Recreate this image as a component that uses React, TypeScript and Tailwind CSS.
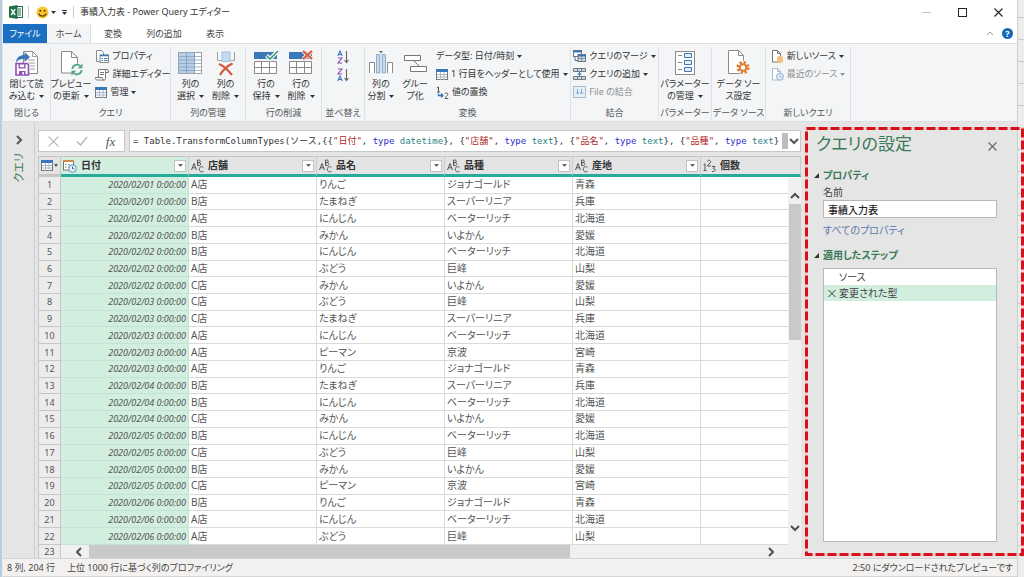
import React from "react";

type Row = [string, string, string, string, string];

const ROWS: Row[] = [
  ["2020/02/01 0:00:00", "A店", "りんご", "ジョナゴールド", "青森"],
  ["2020/02/01 0:00:00", "B店", "たまねぎ", "スーパーリニア", "兵庫"],
  ["2020/02/01 0:00:00", "A店", "にんじん", "ベーターリッチ", "北海道"],
  ["2020/02/02 0:00:00", "B店", "みかん", "いよかん", "愛媛"],
  ["2020/02/02 0:00:00", "B店", "にんじん", "ベーターリッチ", "北海道"],
  ["2020/02/02 0:00:00", "A店", "ぶどう", "巨峰", "山梨"],
  ["2020/02/02 0:00:00", "C店", "みかん", "いよかん", "愛媛"],
  ["2020/02/03 0:00:00", "C店", "ぶどう", "巨峰", "山梨"],
  ["2020/02/03 0:00:00", "C店", "たまねぎ", "スーパーリニア", "兵庫"],
  ["2020/02/03 0:00:00", "A店", "にんじん", "ベーターリッチ", "北海道"],
  ["2020/02/03 0:00:00", "A店", "ピーマン", "京波", "宮崎"],
  ["2020/02/03 0:00:00", "A店", "りんご", "ジョナゴールド", "青森"],
  ["2020/02/04 0:00:00", "B店", "たまねぎ", "スーパーリニア", "兵庫"],
  ["2020/02/04 0:00:00", "B店", "にんじん", "ベーターリッチ", "北海道"],
  ["2020/02/04 0:00:00", "C店", "みかん", "いよかん", "愛媛"],
  ["2020/02/05 0:00:00", "B店", "にんじん", "ベーターリッチ", "北海道"],
  ["2020/02/05 0:00:00", "C店", "ぶどう", "巨峰", "山梨"],
  ["2020/02/05 0:00:00", "B店", "みかん", "いよかん", "愛媛"],
  ["2020/02/05 0:00:00", "C店", "ピーマン", "京波", "宮崎"],
  ["2020/02/06 0:00:00", "B店", "りんご", "ジョナゴールド", "青森"],
  ["2020/02/06 0:00:00", "A店", "にんじん", "ベーターリッチ", "北海道"],
  ["2020/02/06 0:00:00", "A店", "ぶどう", "巨峰", "山梨"],
];

const TEXT_COLUMNS = ["店舗", "品名", "品種", "産地"];

function Caret() {
  return (
    <svg width="5" height="3" viewBox="0 0 5 3" className="shrink-0">
      <path d="M0 0h5L2.5 3z" fill="currentColor" />
    </svg>
  );
}

/* ---------- icons ---------- */

function ExcelIcon() {
  return (
    <svg width="14" height="14" viewBox="0 0 14 14">
      <rect x="7.5" y="1.5" width="6" height="11" fill="#fff" stroke="#217346" />
      <path d="M9 4h3M9 6h3M9 8h3M9 10h3" stroke="#217346" />
      <path d="M0 1.5L8.5 0v14L0 12.5z" fill="#1e7145" />
      <path d="M2.2 4.2l4 5.8M6.2 4.2l-4 5.8" stroke="#fff" strokeWidth="1.4" />
    </svg>
  );
}

function SmileIcon() {
  return (
    <svg width="13" height="13" viewBox="0 0 13 13">
      <circle cx="6.5" cy="6.5" r="6" fill="#fbc62d" />
      <circle cx="4.4" cy="4.8" r="1" fill="#4a3a10" />
      <circle cx="8.6" cy="4.8" r="1" fill="#4a3a10" />
      <path d="M2.8 7.5a3.9 3.9 0 0 0 7.4 0" fill="none" stroke="#4a3a10" strokeWidth="1.1" />
    </svg>
  );
}

function CloseLoadIcon() {
  return (
    <svg width="24" height="26" viewBox="0 0 24 26">
      <path d="M8.5 1.500h9l5 5v17h-14z" fill="#fff" stroke="#8a8a8a" />
      <path d="M17.500 1.500v5h5M13 10h7M13 13h7M15 16h5M15 19h5" fill="none" stroke="#a0a0a0" />
      <path d="M1 12.500C1.500 7 5 5 9.500 5V2l5.500 5-5.500 5V8.800C6 8.800 3.500 9.500 1 12.500z" fill="#3a76b8" />
      <path d="M1 13.500h11l1.500 1.500v10H1z" fill="#fff" stroke="#8e4fb4" strokeWidth="1.600" />
      <path d="M3.500 14h7v4.500h-7zM4 21h6.500v4H4z" fill="#8e4fb4" />
      <path d="M4.800 14.500h4.400v2.700H4.800zM7.300 22h1.700v2.500H7.300z" fill="#fff" />
    </svg>
  );
}

function RefreshIcon() {
  return (
    <svg width="24" height="26" viewBox="0 0 24 26">
      <path d="M2.500 1.500h10l6 6v15.500h-16z" fill="#fff" stroke="#8a8a8a" />
      <path d="M12.500 1.500v6h6" fill="none" stroke="#8a8a8a" />
      <circle cx="18" cy="19.500" r="6" fill="#f3f5f7" />
      <path d="M13.300 18.800a4.800 4.800 0 0 1 8.300-2.600M22.700 20.200a4.800 4.800 0 0 1-8.300 2.600" fill="none" stroke="#4fa582" strokeWidth="1.700" />
      <path d="M23.500 13.500v4.700h-4.700zM12.500 25.500v-4.700h4.700z" fill="#4fa582" />
    </svg>
  );
}

function PropertiesIcon() {
  return (
    <svg width="14" height="13" viewBox="0 0 14 13">
      <path d="M1.500 11.500V.5h5l2 2V5" fill="#fff" stroke="#8a8a8a" />
      <path d="M1.500 11.500h3" stroke="#8a8a8a" />
      <rect x="5" y="5" width="8.500" height="7.500" fill="#fff" stroke="#8a8a8a" />
      <path d="M5 5.500h8.500" stroke="#3a76b8" strokeWidth="1.500" />
      <path d="M6.500 8.500h1.500M9 8.500h3.500M6.500 10.500h1.500M9 10.500h3.500" stroke="#3a76b8" />
    </svg>
  );
}

function AdvancedIcon() {
  return (
    <svg width="14" height="13" viewBox="0 0 14 13">
      <path d="M3.500 9V1.500h8.500c-1.500 0-1.500 1-1.500 2V10c0 1.500-.5 2-1.500 2" fill="#fff" stroke="#777" />
      <path d="M.5 9.500h7c0 1.500.5 2.500 1.500 2.500H2C1 12 .5 11 .5 9.500z" fill="#fff" stroke="#777" />
      <path d="M10.500 4.500h3V3c0-1-.5-1.500-1.500-1.500M5 4.500h4M5 6.500h4" fill="none" stroke="#777" />
    </svg>
  );
}

function SmallTable() {
  return (
    <svg width="12" height="11" viewBox="0 0 12 11" className="shrink-0">
      <rect x=".5" y=".5" width="11" height="10" fill="#fff" stroke="#777" />
      <rect x="0" y="0" width="12" height="3" fill="#3a76b8" />
      <path d="M4.500 3v8M8 3v8M1 5.500h10M1 8h10" stroke="#a9b7c6" />
    </svg>
  );
}

function ChooseColumnsIcon() {
  return (
    <svg width="24" height="24" viewBox="0 0 24 24">
      <rect x=".5" y="1.500" width="23" height="21" fill="#fff" stroke="#9aa4ae" />
      <rect x="1" y="2" width="15" height="20" fill="#b5cfea" />
      <path d="M8.500 2v20M16.500 2v20" stroke="#8ca2b8" />
      <path d="M1 5.500h22M1 9h22M1 12.500h22M1 16h22M1 19.500h22" stroke="#8ca2b8" strokeWidth=".8" />
    </svg>
  );
}

function RemoveColumnsIcon() {
  return (
    <svg width="24" height="26" viewBox="0 0 24 26">
      <path d="M3.500 2v8.500h4M20.500 2v8.500h-4" fill="none" stroke="#9aa0a6" />
      <rect x="8" y="2" width="8" height="9.500" fill="#c4daf0" stroke="#9fbfdd" />
      <path d="M5 14c5 2 9 6 13 11M18.500 13.500C13 16 9 20 6 25" fill="none" stroke="#d5573f" strokeWidth="2.200" />
    </svg>
  );
}

function RowsIcon({ keep }: { keep?: boolean }) {
  return (
    <svg width="26" height="25" viewBox="0 0 26 25">
      <rect x="1" y="2" width="23" height="7" fill="#3a76b8" />
      <path d="M1.500 11.500h22v12h-22zM8.500 11.500v12M16.500 11.500v12M1.500 17.500h22" fill="#fff" stroke="#8a8a8a" />
      {keep ? (
        <path d="M13.500 5.500l3.500 3.500L25 1" fill="none" stroke="#fff" strokeWidth="4" />
      ) : (
        <path d="M15 1l9 8M24 1l-9 8" stroke="#f3dad6" strokeWidth="4" />
      )}
      {keep ? (
        <path d="M13.500 5.500l3.500 3.500L25 1" fill="none" stroke="#3f9a78" strokeWidth="1.600" />
      ) : (
        <path d="M15 1l9 8M24 1l-9 8" stroke="#d5573f" strokeWidth="1.800" />
      )}
    </svg>
  );
}

function SortIcon({ desc }: { desc?: boolean }) {
  return (
    <svg width="12" height="14" viewBox="0 0 12 14">
      <g fill="none" strokeWidth="1.100">
        <path d={desc ? "M.8 13L3 8l2.200 5M1.500 11.500h3" : "M.8 6L3 1l2.200 5M1.500 4.500h3"} stroke="#3a76b8" />
        <path d={desc ? "M1 1h4L1 6h4" : "M1 8h4l-4 5h4"} stroke="#8e4fb4" />
        <path d="M9.500 1v11M7.500 10l2 2.500 2-2.500" stroke="#666" />
      </g>
    </svg>
  );
}

function SplitIcon() {
  return (
    <svg width="24" height="25" viewBox="0 0 24 25">
      <path d="M.5 23V12.500h5V23M18.500 23V12.500h5V23" fill="#fff" stroke="#8a8a8a" />
      <path d="M7.500 23V4.500h3V23zM13.500 23V4.500h3V23z" fill="#c4daf0" stroke="#8fb0d0" />
      <path d="M12 3v20" stroke="#c8c8c8" />
      <path d="M10 1h4l-2 2z" fill="#555" />
    </svg>
  );
}

function GroupByIcon() {
  return (
    <svg width="24" height="22" viewBox="0 0 24 22">
      <path d="M1.500 3.500h16v5h-16zM7.500 14.500h16v5h-16z" fill="#fff" stroke="#777" />
      <path d="M11 9l5 5" stroke="#777" />
    </svg>
  );
}

function ReplaceIcon() {
  return (
    <svg width="13" height="13" viewBox="0 0 13 13">
      <path d="M1 2l1.500-1v5M1 6h3" fill="none" stroke="#555" />
      <path d="M2.500 7.500V9.500h4M5 7.500l2 2-2 2" fill="none" stroke="#3a76b8" strokeWidth="1.300" />
      <path d="M9 8c.5-1.500 3-1.200 2.700.4C11.500 9.800 9.500 10.800 9 12.500h3.300" fill="none" stroke="#555" />
    </svg>
  );
}

function MergeIcon() {
  return (
    <svg width="13" height="12" viewBox="0 0 13 12">
      <rect x=".5" y=".5" width="8" height="6" fill="#fff" stroke="#777" />
      <path d="M0 1.500h9" stroke="#3a76b8" strokeWidth="2" />
      <path d="M2 7v3.500h3" fill="none" stroke="#3a76b8" />
      <rect x="5" y="4.500" width="7.500" height="7" fill="#c4daf0" stroke="#777" />
      <path d="M5 5.500h8" stroke="#3a76b8" strokeWidth="2" />
      <path d="M8.500 6v5.500M5 8.500h7.500" stroke="#777" strokeWidth=".7" />
    </svg>
  );
}

function AppendIcon() {
  return (
    <svg width="13" height="12" viewBox="0 0 13 12">
      <path d="M.5.5h12v3H.5zM.5 8.500h12v3H.5z" fill="#c4daf0" stroke="#777" />
      <path d="M4.500.5v3M8.500.5v3M4.500 8.500v3M8.500 8.500v3" stroke="#777" />
      <path d="M6.500 3.500v5M4.500 6h4" stroke="#3a76b8" strokeWidth="1.200" />
    </svg>
  );
}

function CombineIcon() {
  return (
    <svg width="13" height="12" viewBox="0 0 13 12">
      <rect x=".5" y=".5" width="12" height="11" fill="#e6eff8" stroke="#a9bccf" />
      <path d="M4.500 3v5M3 6.500L4.500 8 6 6.500M8.500 3v5M7 6.500L8.500 8 10 6.500" fill="none" stroke="#7fa5cb" />
    </svg>
  );
}

function ParamIcon() {
  return (
    <svg width="20" height="24" viewBox="0 0 20 24">
      <rect x=".5" y=".5" width="19" height="23" fill="#fff" stroke="#8a8a8a" />
      <path d="M3 4.500h4M3 11.500h4M3 18.500h4" stroke="#8a8a8a" />
      <path d="M9.500 2.500h7v4h-7zM9.500 9.500h7v4h-7zM9.500 16.500h7v4h-7z" fill="#e6eff8" stroke="#3a76b8" />
    </svg>
  );
}

function SourceSettingsIcon() {
  return (
    <svg width="24" height="25" viewBox="0 0 24 25">
      <path d="M2.500.5h10l5 5v18h-15z" fill="#fff" stroke="#8a8a8a" />
      <path d="M12.500.5v5h5" fill="none" stroke="#8a8a8a" />
      <circle cx="17" cy="17.500" r="7" fill="#f3f5f7" />
      <circle cx="17" cy="17.500" r="5" fill="none" stroke="#e07b2e" strokeWidth="3" strokeDasharray="2.100 1.830" />
      <circle cx="17" cy="17.500" r="3.300" fill="#fff" stroke="#e07b2e" strokeWidth="2" />
    </svg>
  );
}

function NewSourceIcon({ recent }: { recent?: boolean }) {
  return (
    <svg width="13" height="13" viewBox="0 0 13 13">
      <path d="M1.500.5h5l3 3v8.500h-8z" fill="#fff" stroke={recent ? "#a9bccf" : "#777"} />
      <path d="M6.500.5v3h3" fill="none" stroke={recent ? "#a9bccf" : "#777"} />
      {recent ? (
        <>
          <circle cx="9" cy="8.700" r="3.500" fill="#e6eff8" stroke="#8fb0d0" />
          <path d="M9 7v2h1.500" fill="none" stroke="#8fb0d0" />
        </>
      ) : (
        <path d="M6 7.500c0-2 6-2 6 0v4c0 1.800-6 1.800-6 0z" fill="#efc27d" />
      )}
    </svg>
  );
}

function AbcIcon() {
  return (
    <svg width="13" height="14" viewBox="0 0 13 14" className="shrink-0">
      <g fill="none" stroke="#555">
        <path d="M.5 11L3 4.500 5.500 11M1.500 8.800h3" />
        <path d="M6.500 1v5.500h1.700c2 0 2-2.800 0-2.800H6.500h1.500c1.800 0 1.800-2.700 0-2.700z" />
        <path d="M12.500 8.300C10.500 6.800 8.300 8 8.300 10.200s2.200 3.600 4.200 2.100" />
      </g>
    </svg>
  );
}

function NumberIcon() {
  return (
    <svg width="13" height="14" viewBox="0 0 13 14" className="shrink-0">
      <g fill="none" stroke="#555">
        <path d="M.5 6l1.500-1.200V11.500M.5 11.500h3" />
        <path d="M4.500 2.500c.3-2 3.300-1.500 3 .3C7.300 4.500 5 5.500 4.500 7h3.300" />
        <path d="M9 7.500h3L10.300 9.500c2.700 0 2.700 3.500-1.300 3" />
      </g>
    </svg>
  );
}

function DateIcon() {
  return (
    <svg width="14" height="14" viewBox="0 0 14 14" className="shrink-0">
      <rect x=".5" y="1.500" width="10" height="9.500" fill="#fff" stroke="#777" />
      <path d="M0 2h11" stroke="#d08a4e" strokeWidth="2" />
      <path d="M2 5.500h1.500M5 5.500h1.500M2 8h1.500M5 8h1.500" stroke="#777" />
      <circle cx="9.500" cy="9.500" r="3.800" fill="#e6f1fb" stroke="#5a90c4" />
      <path d="M9.500 7.300v2.400h1.800" fill="none" stroke="#44678a" />
    </svg>
  );
}

function Chevron({ dir, className = "" }: { dir: "up" | "down" | "left" | "right"; className?: string }) {
  const paths = {
    up: "M1 7l4-4 4 4",
    down: "M1 3l4 4 4-4",
    left: "M7 1L3 5l4 4",
    right: "M3 1l4 4-4 4",
  };
  return (
    <svg width="10" height="10" viewBox="0 0 10 10" className={className}>
      <path d={paths[dir]} fill="none" stroke="currentColor" strokeWidth="2" />
    </svg>
  );
}

function Cross({ className = "" }: { className?: string }) {
  return (
    <svg width="9" height="9" viewBox="0 0 9 9" className={className}>
      <path d="M.5.5l8 8M8.500.5l-8 8" stroke="currentColor" strokeWidth="1.100" />
    </svg>
  );
}

/* ---------- ribbon ---------- */

function BigButton({ icon, lines, caret }: { icon: React.ReactNode; lines: [string, string]; caret?: boolean }) {
  return (
    <button className="flex flex-col items-center whitespace-nowrap leading-3">
      <span className="flex h-[31px] items-center">{icon}</span>
      <span>{lines[0]}</span>
      <span className="flex items-center gap-1">
        {lines[1]}
        {caret && <Caret />}
      </span>
    </button>
  );
}

function SmallButton({ icon, label, caret, muted }: { icon?: React.ReactNode; label: string; caret?: boolean; muted?: boolean }) {
  return (
    <button className={`flex h-[18px] items-center gap-[3px] whitespace-nowrap ${muted ? "text-[#909090]" : ""}`}>
      {icon}
      <span>{label}</span>
      {caret && <Caret />}
    </button>
  );
}

function Group({ label, width, children }: { label: string; width: string; children: React.ReactNode }) {
  return (
    <section aria-label={label} className={`flex shrink-0 flex-col border-r border-[#dfe2e5] ${width}`}>
      <div className="flex flex-1 justify-center gap-1">{children}</div>
      <div className="h-4 whitespace-nowrap text-center leading-4 text-[#555]">{label}</div>
    </section>
  );
}

function Ribbon() {
  return (
    <div className="flex h-[79px] shrink-0 overflow-hidden border-y border-[#dcdfe2] bg-[#f3f5f7] pt-[3px] text-[9px] text-[#333]">
      <Group label="閉じる" width="w-[48px]">
        <BigButton icon={<CloseLoadIcon />} lines={["閉じて読", "み込む"]} caret />
      </Group>
      <Group label="クエリ" width="w-[120px]">
        <BigButton icon={<RefreshIcon />} lines={["プレビュー", "の更新"]} caret />
        <div className="flex flex-col">
          <SmallButton icon={<PropertiesIcon />} label="プロパティ" />
          <SmallButton icon={<AdvancedIcon />} label="詳細エディター" />
          <SmallButton icon={<SmallTable />} label="管理" caret />
        </div>
      </Group>
      <Group label="列の管理" width="w-[75px]">
        <div className="flex gap-2">
          <BigButton icon={<ChooseColumnsIcon />} lines={["列の", "選択"]} caret />
          <BigButton icon={<RemoveColumnsIcon />} lines={["列の", "削除"]} caret />
        </div>
      </Group>
      <Group label="行の削減" width="w-[76px]">
        <div className="flex gap-2">
          <BigButton icon={<RowsIcon keep />} lines={["行の", "保持"]} caret />
          <BigButton icon={<RowsIcon />} lines={["行の", "削除"]} caret />
        </div>
      </Group>
      <Group label="並べ替え" width="w-[43px]">
        <div className="flex flex-col gap-1 pt-[3px]">
          <button aria-label="昇順で並べ替え"><SortIcon /></button>
          <button aria-label="降順で並べ替え"><SortIcon desc /></button>
        </div>
      </Group>
      <Group label="変換" width="w-[206px]">
        <div className="flex gap-2 pr-1">
          <BigButton icon={<SplitIcon />} lines={["列の", "分割"]} caret />
          <BigButton icon={<GroupByIcon />} lines={["グルー", "プ化"]} />
        </div>
        <div className="flex flex-col">
          <SmallButton label="データ型: 日付/時刻" caret />
          <SmallButton icon={<SmallTable />} label="1 行目をヘッダーとして使用" caret />
          <SmallButton icon={<ReplaceIcon />} label="値の置換" />
        </div>
      </Group>
      <Group label="結合" width="w-[88px]">
        <div className="flex flex-col">
          <SmallButton icon={<MergeIcon />} label="クエリのマージ" caret />
          <SmallButton icon={<AppendIcon />} label="クエリの追加" caret />
          <SmallButton icon={<CombineIcon />} label="File の結合" muted />
        </div>
      </Group>
      <Group label="パラメーター" width="w-[53px]">
        <BigButton icon={<ParamIcon />} lines={["パラメーター", "の管理"]} caret />
      </Group>
      <Group label="データ ソース" width="w-[54px]">
        <BigButton icon={<SourceSettingsIcon />} lines={["データ ソー", "ス設定"]} />
      </Group>
      <Group label="新しいクエリ" width="w-[85px]">
        <div className="flex flex-col">
          <SmallButton icon={<NewSourceIcon />} label="新しいソース" caret />
          <SmallButton icon={<NewSourceIcon recent />} label="最近のソース" caret muted />
        </div>
      </Group>
    </div>
  );
}

function TitleBar() {
  return (
    <header className="flex h-6 shrink-0 items-center bg-white pl-[6px] text-[9px] text-[#333]">
      <ExcelIcon />
      <span className="ml-[5px] h-3 w-px bg-[#c8c8c8]" />
      <button aria-label="フィードバック" className="ml-[7px] flex items-center gap-[2px]">
        <SmileIcon />
        <Caret />
      </button>
      <button aria-label="クイック アクセスのカスタマイズ" className="ml-[6px] flex flex-col items-center gap-px">
        <span className="h-px w-[5px] bg-[#333]" />
        <Caret />
      </button>
      <span className="mx-[6px] h-3 w-px bg-[#c8c8c8]" />
      <h1>事績入力表 - Power Query エディター</h1>
      <div className="ml-auto flex items-center gap-[27px] pr-[14px]">
        <button aria-label="最小化" className="h-[9px] w-[9px]"><span className="block h-px bg-[#c0c0c0]" /></button>
        <button aria-label="最大化" className="h-[9px] w-[9px] border border-[#222]" />
        <button aria-label="閉じる"><Cross className="text-[#222]" /></button>
      </div>
    </header>
  );
}

function Tabs() {
  const plain = "h-full text-center whitespace-nowrap";
  return (
    <nav className="flex h-[19px] shrink-0 items-center bg-white text-[9px]">
      <button className={`${plain} w-[44px] bg-[#1a6fc0] text-white`}>ファイル</button>
      <button className={`${plain} w-[44px] border-r border-[#dcdfe2] bg-[#f3f5f7]`}>ホーム</button>
      <button className={`${plain} w-[44px]`}>変換</button>
      <button className={`${plain} w-[58px]`}>列の追加</button>
      <button className={`${plain} w-[44px]`}>表示</button>
      <div className="ml-auto flex items-center gap-2 pr-1">
        <button aria-label="リボンを折りたたむ">
          <svg width="8" height="5" viewBox="0 0 8 5"><path d="M1 4l3-3 3 3" fill="none" stroke="#999" /></svg>
        </button>
        <button aria-label="ヘルプ" className="flex h-[11px] w-[11px] items-center justify-center rounded-full bg-[#1568b8] text-[9px] font-bold leading-none text-white">?</button>
      </div>
    </nav>
  );
}

/* ---------- formula bar and grid ---------- */

function Col({ name, type = "text" }: { name: string; type?: string }) {
  return (
    <>
      {"{"}<span className="text-[#b02a2a]">"{name}"</span>, <span className="text-[#2a2ad0]">type</span>{" "}
      <span className="text-[#2c8585]">{type}</span>{"}"}
    </>
  );
}

function FormulaBar() {
  return (
    <div className="flex h-[22px] shrink-0 gap-1">
      <div className="flex w-[87px] shrink-0 items-center justify-around border border-[#c6c6c6] bg-white text-[#b8b8b8]">
        <button aria-label="キャンセル"><Cross className="h-[11px] w-[11px]" /></button>
        <button aria-label="確定">
          <svg width="12" height="10" viewBox="0 0 12 10"><path d="M1 5.500L4.500 9 11 1" fill="none" stroke="currentColor" strokeWidth="1.500" /></svg>
        </button>
        <button aria-label="ステップの追加" className="font-['Liberation_Serif',serif] text-[13px] italic leading-none text-[#555]">fx</button>
      </div>
      <div className="flex min-w-0 flex-1 items-center border border-[#c6c6c6] bg-white pl-[3px]">
        <code className="min-w-0 flex-1 overflow-hidden whitespace-nowrap font-['DejaVu_Sans_Mono','Noto_Sans_CJK_JP',monospace] text-[9px] leading-4 text-[#333]">
          = Table.TransformColumnTypes(ソース,{"{"}
          <Col name="日付" type="datetime" />, <Col name="店舗" />, <Col name="品名" />, <Col name="品種" />
        </code>
        <span className="h-4 w-[6px] shrink-0 bg-[#bdbdbd]" />
        <button aria-label="数式バーを展開" className="shrink-0 px-px text-[#555]"><Chevron dir="down" /></button>
      </div>
    </div>
  );
}

function HeaderCell({ icon, name, filter = true, tint }: { icon: React.ReactNode; name: string; filter?: boolean; tint?: boolean }) {
  return (
    <th className={`border-b-[3px] border-r border-b-[#27a99b] border-r-[#c9c9c9] p-0 ${tint ? "bg-[#d1eedf]" : "bg-[#e4e4e4]"}`}>
      <div className="flex h-[17px] items-center gap-1 px-[2px] font-bold text-[#333]">
        {icon}
        <span>{name}</span>
        {filter && (
          <button aria-label={`${name}のフィルター`} className="ml-auto flex h-3 w-3 items-center justify-center border border-[#c0c0c0] bg-white text-[#666]">
            <Caret />
          </button>
        )}
      </div>
    </th>
  );
}

function Grid() {
  const cell = "overflow-hidden whitespace-nowrap border-b border-r border-[#dadada] bg-white px-[2px] py-0";
  return (
    <div className="mt-1 flex min-h-0 flex-1 flex-col border-l border-t border-[#c6c6c6]">
      <div className="relative min-h-0 flex-1">
        <table className="h-full w-full table-fixed border-separate border-spacing-0 leading-[15px] text-[#555]">
          <colgroup>
            <col className="w-[22px]" />
            <col className="w-[128px]" />
            <col className="w-[128px]" />
            <col className="w-[128px]" />
            <col className="w-[128px]" />
            <col className="w-[128px]" />
            <col />
          </colgroup>
          <thead>
            <tr className="h-5">
              <th className="border-b-[3px] border-r border-[#c6c6c6] bg-[#e4e4e4] p-0">
                <button aria-label="テーブル操作" className="flex h-[17px] w-full items-center justify-center gap-px">
                  <SmallTable />
                  <svg width="4" height="3" viewBox="0 0 4 3"><path d="M0 0h4L2 3z" fill="#555" /></svg>
                </button>
              </th>
              <HeaderCell icon={<DateIcon />} name="日付" tint />
              {TEXT_COLUMNS.map((name) => (
                <HeaderCell key={name} icon={<AbcIcon />} name={name} />
              ))}
              <HeaderCell icon={<NumberIcon />} name="個数" filter={false} />
            </tr>
          </thead>
          <tbody>
            {ROWS.map((row, i) => (
              <tr key={i}>
                <td className="border-b border-r border-[#c6c6c6] bg-[#ececec] p-0 text-center text-[9px]">{i + 1}</td>
                <td className="border-b border-r border-[#c5e3d3] bg-[#d1eedf] px-[2px] py-0 text-right text-[9px] italic">{row[0]}</td>
                <td className={cell}>{row[1]}</td>
                <td className={cell}>{row[2]}</td>
                <td className={cell}>{row[3]}</td>
                <td className={cell}>{row[4]}</td>
                <td className={cell} />
              </tr>
            ))}
          </tbody>
        </table>
        <div className="absolute bottom-0 right-0 top-[21px] flex w-[13px] flex-col items-center bg-[#f0f0f0] text-[#505050]">
          <button aria-label="上へスクロール" className="flex h-[26px] items-end pb-[3px]"><Chevron dir="up" /></button>
          <div className="h-[136px] w-[12px] bg-[#c9c9c9]" />
          <button aria-label="下へスクロール" className="mt-auto pb-3"><Chevron dir="down" /></button>
        </div>
      </div>
      <div className="flex h-[13px] shrink-0 bg-[#f0f0f0] text-[#505050]">
        <div className="w-[22px] border-r border-[#c6c6c6] bg-[#ececec] text-center text-[9px] leading-[13px]">23</div>
        <button aria-label="左へスクロール" className="flex w-[28px] items-center justify-center pl-2"><Chevron dir="left" /></button>
        <div className="flex flex-1">
          <div className="w-[71%] bg-[#c9c9c9]" />
        </div>
        <button aria-label="右へスクロール" className="mr-[25px]"><Chevron dir="right" /></button>
      </div>
    </div>
  );
}

/* ---------- settings pane ---------- */

function SectionTitle({ children }: { children: React.ReactNode }) {
  return (
    <h3 className="flex h-[18px] items-center gap-1 font-bold text-[#3a7a58]">
      <svg width="5" height="5" viewBox="0 0 5 5"><path d="M5 0v5H0z" fill="#333" /></svg>
      {children}
    </h3>
  );
}

function SettingsPane() {
  return (
    <aside className="flex w-[213px] shrink-0 flex-col pb-4 pl-[10px] pr-5 pt-2">
      <div className="flex h-7 items-center justify-between">
        <h2 className="pl-[2px] text-[17px] leading-7 text-[#3a7a58]">クエリの設定</h2>
        <button aria-label="ウィンドウを閉じる" className="pt-1"><Cross className="text-[#666]" /></button>
      </div>
      <div className="mt-2"><SectionTitle>プロパティ</SectionTitle></div>
      <div className="flex flex-col items-start pl-[9px]">
        <label htmlFor="query-name" className="h-4 leading-4 text-[#444]">名前</label>
        <input
          id="query-name"
          defaultValue="事績入力表"
          className="h-[18px] w-full border border-[#b8b8b8] bg-white px-1 font-medium text-[#222] outline-none"
        />
        <a href="#properties" className="mt-1 leading-4 text-[#5b78ab]">すべてのプロパティ</a>
      </div>
      <div className="mt-2"><SectionTitle>適用したステップ</SectionTitle></div>
      <ul className="ml-[9px] mt-1 flex-1 border border-[#b8b8b8] bg-white text-[#444]">
        <li><button className="flex h-4 w-full items-center pl-[15px]">ソース</button></li>
        <li>
          <button className="flex h-4 w-full items-center gap-[3px] bg-[#d1eedf] pl-1">
            <Cross className="w-[8px] text-[#333]" />
            変更された型
          </button>
        </li>
      </ul>
    </aside>
  );
}

function Highlight() {
  return (
    <svg className="pointer-events-none absolute bottom-[21px] right-0 top-[127px] h-[429px] w-[219px]" viewBox="0 0 219 429">
      <rect x="1.500" y="1.500" width="216" height="426" fill="none" stroke="#f8d2d0" strokeWidth="3" />
      <rect x="1.500" y="1.500" width="216" height="426" fill="none" stroke="#d8101a" strokeWidth="3" strokeDasharray="9 3" />
    </svg>
  );
}

export default function App() {
  return (
    <div className="relative flex h-screen overflow-hidden bg-[#e5e5e5] font-['Noto_Sans','Noto_Sans_CJK_JP',sans-serif] text-[10px] text-[#444] [font-feature-settings:'palt']">
      <div className="w-[2px] shrink-0 bg-[#b7cde0]" />
      <div className="flex min-w-0 flex-1 flex-col border-l border-[#e8e8e8]">
        <TitleBar />
        <Tabs />
        <Ribbon />
        <main className="flex min-h-0 flex-1 bg-[#e5e5e5]">
          <div className="flex w-8 shrink-0 flex-col items-center gap-2 border-r border-[#cfcfcf] pt-[13px]">
            <button aria-label="クエリ ウィンドウを展開" className="text-[#555]"><Chevron dir="right" /></button>
            <span className="text-[11px] leading-4 text-[#3a7a58] [writing-mode:sideways-lr]">クエリ</span>
          </div>
          <div className="flex min-w-0 flex-1 flex-col px-[3px] pt-2">
            <FormulaBar />
            <Grid />
          </div>
          <SettingsPane />
        </main>
        <footer className="flex h-[19px] shrink-0 items-center gap-3 border-y border-[#d6d6d6] bg-[#f3f1f0] px-1 text-[9px] text-[#444]">
          <span>8 列, 204 行</span>
          <span>上位 1000 行に基づく列のプロファイリング</span>
          <span className="ml-auto">2:50 にダウンロードされたプレビューです</span>
        </footer>
      </div>
      <div className="flex w-[7px] shrink-0 flex-col border-l border-[#cfcfcf] bg-[#ededed] pt-[17px]">
        {Array.from({ length: 25 }, (_, i) => (
          <span key={i} className="h-[22px] shrink-0 border-t border-[#c3cbd3]" />
        ))}
      </div>
      <Highlight />
    </div>
  );
}
